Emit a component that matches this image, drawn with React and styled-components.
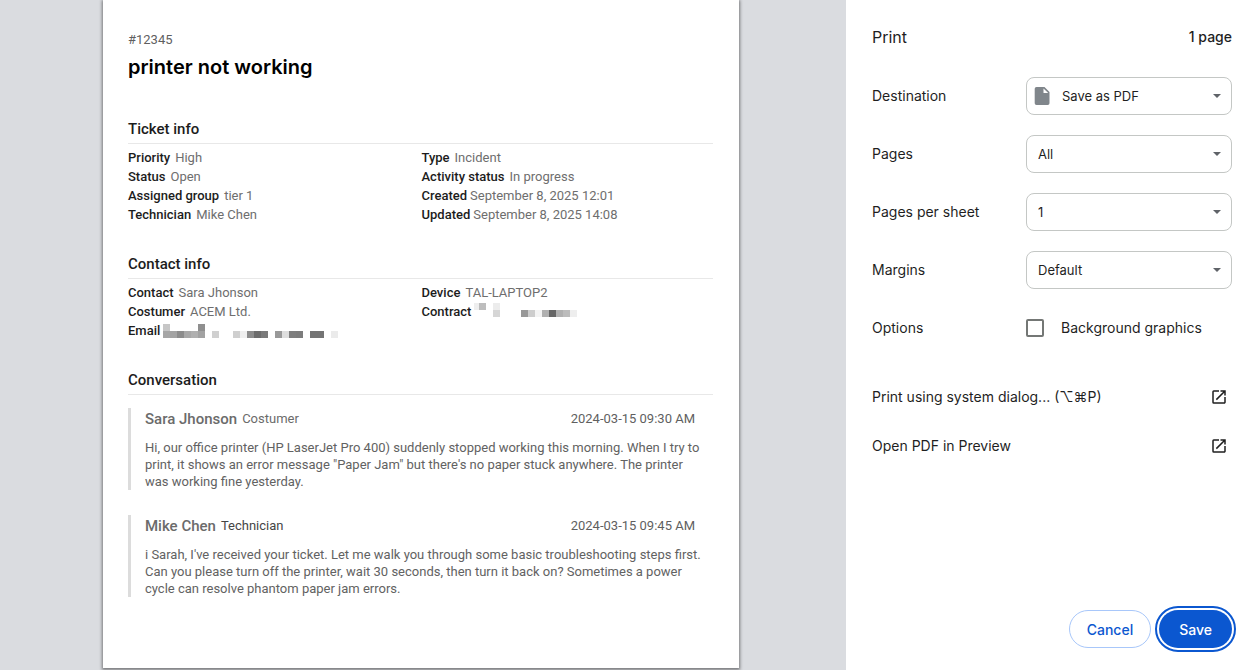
import React, { useState } from "react";
import styled, { createGlobalStyle } from "styled-components";

const ticketInfo = [
  { label: "Priority", value: "High" },
  { label: "Type", value: "Incident" },
  { label: "Status", value: "Open" },
  { label: "Activity status", value: "In progress" },
  { label: "Assigned group", value: "tier 1" },
  { label: "Created", value: "September 8, 2025 12:01", tight: true },
  { label: "Technician", value: "Mike Chen" },
  { label: "Updated", value: "September 8, 2025 14:08", tight: true },
];

// redacted values: [column, row, shade] on a grid of 7px cells
const emailMosaic = {
  viewBox: "0 0 175 14",
  cells: [
    [0, 0, "#c6c6c6"], [5, 0, "#8f8f8f"],
    [0, 1, "#a6a6a6"], [1, 1, "#a3a3a3"], [2, 1, "#8c8c8c"], [3, 1, "#a8a8a8"],
    [4, 1, "#b0b0b0"], [5, 1, "#a2a2a2"], [7, 1, "#d0d0d0"], [10, 1, "#cfcfcf"],
    [11, 1, "#efefef"], [12, 1, "#8c8c8c"], [13, 1, "#6c6c6c"], [14, 1, "#7a7a7a"],
    [16, 1, "#999999"], [17, 1, "#dedede"], [18, 1, "#7e7e7e"], [19, 1, "#7c7c7c"],
    [21, 1, "#747474"], [22, 1, "#747474"], [24, 1, "#ebebeb"],
  ],
};

// the first column is cut off on its left side
const contractMosaic = {
  viewBox: "2 0 103 17",
  cells: [
    [0, 0, "#eeeeee"], [1, 0, "#bdbdbd"], [3, 0, "#ececec"], [3, 1, "#d6d6d6"],
    [7, 1, "#989898"], [8, 1, "#cdcdcd"], [9, 1, "#f3f3f3"], [10, 1, "#b0b0b0"],
    [11, 1, "#666666"], [12, 1, "#b0b0b0"], [13, 1, "#bcbcbc"], [14, 1, "#eeeeee"],
  ],
};

const contactInfo = [
  { label: "Contact", value: "Sara Jhonson" },
  { label: "Device", value: "TAL-LAPTOP2" },
  { label: "Costumer", value: "ACEM Ltd." },
  { label: "Contract", mosaic: contractMosaic, tight: true },
  { label: "Email", mosaic: emailMosaic, tight: true },
];

const messages = [
  {
    name: "Sara Jhonson",
    role: "Costumer",
    time: "2024-03-15 09:30 AM",
    text: `Hi, our office printer (HP LaserJet Pro 400) suddenly stopped working this morning. When I try to print, it shows an error message "Paper Jam" but there's no paper stuck anywhere. The printer was working fine yesterday.`,
  },
  {
    name: "Mike Chen",
    role: "Technician",
    dark: true,
    time: "2024-03-15 09:45 AM",
    text: "i Sarah, I've received your ticket. Let me walk you through some basic troubleshooting steps first. Can you please turn off the printer, wait 30 seconds, then turn it back on? Sometimes a power cycle can resolve phantom paper jam errors.",
  },
];

const settings = [
  { id: "destination", label: "Destination", options: ["Save as PDF"], file: true },
  { id: "pages", label: "Pages", options: ["All", "Odd pages only", "Even pages only", "Custom"] },
  { id: "sheet", label: "Pages per sheet", options: ["1", "2", "4", "6", "9", "16"] },
  { id: "margins", label: "Margins", options: ["Default", "None", "Minimum", "Custom"] },
];

const Redacted = ({ viewBox, cells }) => {
  const [, , width, height] = viewBox.split(" ");
  return (
    <Mosaic width={width} height={height} viewBox={viewBox} shapeRendering="crispEdges" aria-hidden="true">
      {cells.map(([x, y, fill]) => (
        <rect key={`${x}-${y}`} x={x * 7} y={y * 7} width="7" height="7" fill={fill} />
      ))}
    </Mosaic>
  );
};

const InfoSection = ({ title, items }) => (
  <Section>
    <SectionTitle>{title}</SectionTitle>
    <InfoGrid>
      {items.map((item) => (
        <InfoRow key={item.label} $tight={item.tight}>
          <dt>{item.label}</dt>
          <dd>{item.mosaic ? <Redacted {...item.mosaic} /> : item.value}</dd>
        </InfoRow>
      ))}
    </InfoGrid>
  </Section>
);

const FileIcon = () => (
  <svg width="16" height="18" viewBox="0 0 16 18" aria-hidden="true">
    <path
      fill="#80868b"
      fillRule="evenodd"
      d="M2.500 0h8l5 5v11.200a1.800 1.800 0 0 1-1.800 1.800H2.500A1.800 1.800 0 0 1 .7 16.200V1.800A1.800 1.800 0 0 1 2.500 0zm7 1.400V6h4.700z"
    />
  </svg>
);

const OpenIcon = () => (
  <svg width="18" height="18" viewBox="0 0 24 24" aria-hidden="true">
    <path
      fill="#1f1f1f"
      d="M19 19H5V5h7V3H5a2 2 0 0 0-2 2v14a2 2 0 0 0 2 2h14c1.100 0 2-.9 2-2v-7h-2v7zM14 3v2h3.590l-9.830 9.830 1.410 1.410L19 6.410V10h2V3h-7z"
    />
  </svg>
);

const App = () => {
  const [background, setBackground] = useState(false);

  return (
    <>
      <GlobalStyle />
      <Dialog>
        <Preview>
          <Paper>
            <TicketId>#12345</TicketId>
            <TicketTitle>printer not working</TicketTitle>
            <InfoSection title="Ticket info" items={ticketInfo} />
            <InfoSection title="Contact info" items={contactInfo} />
            <Section>
              <SectionTitle>Conversation</SectionTitle>
              <Messages>
                {messages.map((msg) => (
                  <Message key={msg.name}>
                    <MessageHeader>
                      <Name>{msg.name}</Name>
                      <Role $dark={msg.dark}>{msg.role}</Role>
                      <Time>{msg.time}</Time>
                    </MessageHeader>
                    <MessageText>{msg.text}</MessageText>
                  </Message>
                ))}
              </Messages>
            </Section>
          </Paper>
        </Preview>
        <Sidebar>
          <SidebarHeader>
            <SidebarTitle>Print</SidebarTitle>
            <PageCount>1 page</PageCount>
          </SidebarHeader>
          {settings.map(({ id, label, options, file }) => (
            <Setting key={id}>
              <label htmlFor={id}>{label}</label>
              <SelectBox>
                <Select id={id} $file={file}>
                  {options.map((option) => (
                    <option key={option}>{option}</option>
                  ))}
                </Select>
                {file && (
                  <SelectIcon>
                    <FileIcon />
                  </SelectIcon>
                )}
                <Arrow width="8" height="4" viewBox="0 0 8 4" aria-hidden="true">
                  <path d="M0 0h8L4 4z" fill="#5f6368" />
                </Arrow>
              </SelectBox>
            </Setting>
          ))}
          <Setting>
            <span>Options</span>
            <CheckLabel>
              <Checkbox
                type="checkbox"
                checked={background}
                onChange={(e) => setBackground(e.target.checked)}
              />
              Background graphics
            </CheckLabel>
          </Setting>
          <Links>
            <LinkButton type="button">
              Print using system dialog... (⌥⌘P)
              <OpenIcon />
            </LinkButton>
            <LinkButton type="button">
              Open PDF in Preview
              <OpenIcon />
            </LinkButton>
          </Links>
          <Actions>
            <ActionButton type="button">Cancel</ActionButton>
            <ActionButton type="button" $primary>
              Save
            </ActionButton>
          </Actions>
        </Sidebar>
      </Dialog>
    </>
  );
};

const GlobalStyle = createGlobalStyle`
  * {
    box-sizing: border-box;
  }

  body {
    margin: 0;
    background: #fff;
  }

  h1, h2, p, dl, dd {
    margin: 0;
  }
`;

const Dialog = styled.div`
  display: flex;
  min-height: 100vh;
`;

const Preview = styled.main`
  flex: 1;
  display: flex;
  padding: 0 107px 2px 103px;
  background: #dadce0;
  font-family: Roboto, "Liberation Sans", sans-serif;
`;

const Paper = styled.article`
  flex: 1;
  padding: 30px 26px 30px 25px;
  background: #fff;
  box-shadow: 0 1px 3px 1px rgba(0, 0, 0, 0.45);
`;

const TicketId = styled.p`
  font-size: 13px;
  line-height: 20px;
  color: #5f5f5f;
`;

const TicketTitle = styled.h1`
  margin-top: 3px;
  font-family: Inter, "Liberation Sans", sans-serif;
  font-size: 20px;
  font-weight: 600;
  line-height: 28px;
  color: #000;
`;

const Section = styled.section`
  margin-top: 28px;

  h1 + & {
    margin-top: 36px;
  }
`;

const SectionTitle = styled.h2`
  padding-bottom: 2px;
  border-bottom: 1px solid #e8e8e8;
  font-size: 15px;
  font-weight: 500;
  line-height: 24px;
  color: #1c1c1c;
`;

const InfoGrid = styled.dl`
  display: grid;
  grid-template-columns: 1fr 1fr;
  column-gap: 2px;
  padding-top: 4px;
`;

const InfoRow = styled.div`
  display: flex;
  align-items: center;
  gap: ${({ $tight }) => ($tight ? "3px" : "5px")};
  height: 19px;
  font-size: 13px;
  line-height: 19px;

  dt {
    font-weight: 500;
    color: #1c1c1c;
  }

  dd {
    color: #6e6e6e;
  }
`;

const Mosaic = styled.svg`
  display: block;
`;

const Messages = styled.div`
  display: flex;
  flex-direction: column;
  gap: 25px;
  padding-top: 13px;
`;

const Message = styled.div`
  padding: 0 7px 0 14px;
  border-left: 3px solid #dcdcdc;
`;

const MessageHeader = styled.div`
  display: flex;
  gap: 5px;
  padding-right: 11px;
  font-size: 13px;
  line-height: 22px;
  color: #5f5f5f;
`;

const Name = styled.strong`
  font-size: 15px;
  font-weight: 500;
  color: #6b6b6b;
`;

const Role = styled.span`
  color: ${({ $dark }) => ($dark ? "#454545" : "#6b6b6b")};
`;

const Time = styled.time`
  margin-left: auto;
`;

const MessageText = styled.p`
  margin-top: 9px;
  font-size: 13px;
  line-height: 17px;
  color: #626262;
`;

const Sidebar = styled.aside`
  display: flex;
  flex-direction: column;
  width: 410px;
  padding: 0 24px 22px 26px;
  font-family: Inter, "Liberation Sans", "DejaVu Sans", sans-serif;
  font-size: 14px;
  line-height: 20px;
  color: #1f1f1f;
`;

const SidebarHeader = styled.header`
  display: flex;
  justify-content: space-between;
  align-items: center;
  padding: 25px 0 18px;
`;

const SidebarTitle = styled.h1`
  font-size: 16px;
  font-weight: 400;
  line-height: 24px;
`;

const PageCount = styled.span`
  font-weight: 500;
`;

const Setting = styled.div`
  display: grid;
  grid-template-columns: 154px 1fr;
  align-items: center;
  height: 58px;
`;

const SelectBox = styled.div`
  display: grid;
  align-items: center;

  > * {
    grid-area: 1 / 1;
  }
`;

const Select = styled.select`
  appearance: none;
  width: 100%;
  height: 38px;
  padding: 0 32px 0 ${({ $file }) => ($file ? "35px" : "11px")};
  border: 1px solid #c4c7c5;
  border-radius: 8px;
  background: #fff;
  font-family: inherit;
  font-size: 13px;
  color: #1f1f1f;
`;

const SelectIcon = styled.span`
  display: flex;
  padding-left: 8px;
  pointer-events: none;
`;

const Arrow = styled.svg`
  justify-self: end;
  margin-right: 11px;
  pointer-events: none;
`;

const CheckLabel = styled.label`
  display: flex;
  align-items: center;
  gap: 17px;
`;

const Checkbox = styled.input`
  appearance: none;
  width: 18px;
  height: 18px;
  margin: 0;
  border: 2px solid #747775;
  border-radius: 2px;

  &:checked {
    background: #0b57d0;
    border-color: #0b57d0;
  }
`;

const Links = styled.div`
  padding-top: 15px;
`;

const LinkButton = styled.button`
  display: flex;
  justify-content: space-between;
  align-items: center;
  width: 100%;
  height: 49px;
  padding: 0 4px 0 0;
  border: none;
  background: none;
  font: inherit;
  color: inherit;
  cursor: pointer;
`;

const Actions = styled.footer`
  display: flex;
  justify-content: flex-end;
  gap: 8px;
  margin-top: auto;
`;

const ActionButton = styled.button`
  height: 38px;
  padding: 0 ${({ $primary }) => ($primary ? "20px" : "17px")};
  border: ${({ $primary }) => ($primary ? "none" : "1px solid #a8c7fa")};
  border-radius: 19px;
  outline: ${({ $primary }) => ($primary ? "2px solid #0b57d0" : "none")};
  outline-offset: 2px;
  background: ${({ $primary }) => ($primary ? "#0b57d0" : "#fff")};
  color: ${({ $primary }) => ($primary ? "#fff" : "#0b57d0")};
  font-family: inherit;
  font-size: 14px;
  font-weight: 500;
  cursor: pointer;
`;

export default App;
